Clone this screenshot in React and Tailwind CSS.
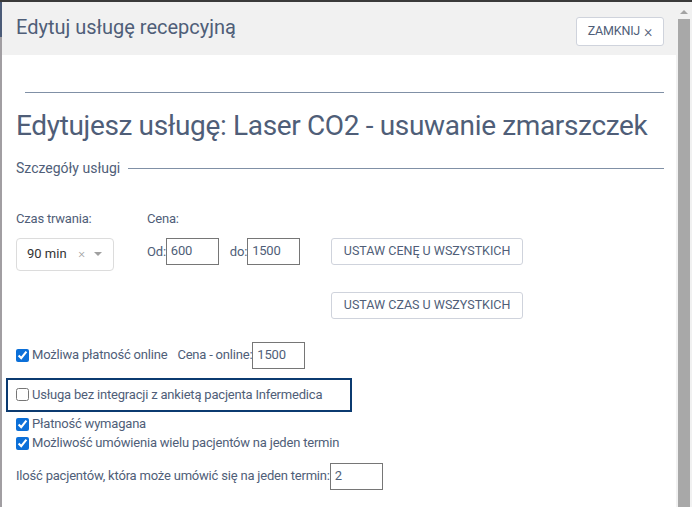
import React from "react";

const txt = "text-[#4f5e78]";
const t13 = `text-[13px] tracking-[-0.2px] ${txt}`;

function Check({ checked }) {
  return (
    <input
      type="checkbox"
      defaultChecked={checked}
      className="m-0 h-[13px] w-[13px] shrink-0 accent-[#0b6fd8]"
    />
  );
}

function Box({ value, w = "w-[53px]" }) {
  return (
    <div className={`${w} h-[27px] shrink-0 border border-[#767676] bg-white pl-[4px] flex items-center text-[13px] tracking-[-0.2px] text-[#4f5e78]`}>
      {value}
    </div>
  );
}

function Btn({ children }) {
  return (
    <button className="h-[27px] w-[192px] rounded-[3px] border border-[#cfd3dc] bg-white text-[12.5px] text-[#4f5e78]">
      {children}
    </button>
  );
}

export default function App() {
  return (
    <div className="w-[692px] h-[507px] overflow-hidden bg-white" style={{ fontFamily: "Roboto, 'Liberation Sans', sans-serif" }}>
      <div className="h-[2px] bg-[#3a3a3a]" />
      <div className="flex h-[505px]">
        <div className="w-[2px] shrink-0 flex flex-col">
          <div className="h-[35px] bg-[#4b5b78]" />
          <div className="flex-1 bg-[#a19ea2]" />
        </div>
        <div className="flex-1 min-w-0 flex flex-col">
          <div className="h-[53px] shrink-0 bg-[#f1f1f1] flex items-center justify-between pl-[14px] pr-[12px]">
            <div className={`text-[20px] ${txt} -mt-[4px]`}>Edytuj usługę recepcyjną</div>
            <button className="h-[29px] w-[88px] rounded-[3px] border border-[#cfd3dc] bg-white text-[12.5px] tracking-[-0.2px] text-[#4f5e78] mt-[6px] flex items-center justify-center gap-[4px]">
              ZAMKNIJ <span className="font-light text-[16px] leading-none">×</span>
            </button>
          </div>
          <div className="flex-1 pl-[14px] pr-[12px]">
            <div className="ml-[9px] mt-[37px] h-px bg-[#8090a6]" />
            <div className={`mt-[16px] text-[28px] tracking-[-0.35px] leading-[34px] whitespace-nowrap ${txt}`}>
              Edytujesz usługę: Laser CO2 - usuwanie zmarszczek
            </div>
            <div className="mt-[15px] flex items-center gap-[8px]">
              <span className={`text-[14px] ${txt}`}>Szczegóły usługi</span>
              <div className="flex-1 h-px bg-[#8090a6]" />
            </div>
            <div className="mt-[30px] flex">
              <div className="w-[131px] shrink-0">
                <div className={t13}>Czas trwania:</div>
                <div className="mt-[9px] h-[33px] w-[98px] rounded-[4px] border border-[#dcdcdc] flex items-center pl-[10px] pr-[11px]">
                  <span className="text-[13px] text-[#333]">90 min</span>
                  <span className="ml-auto text-[13px] text-[#a0a0a0] font-light">×</span>
                  <span className="ml-[9px] w-0 h-0 border-l-[4px] border-r-[4px] border-t-[4px] border-l-transparent border-r-transparent border-t-[#a0a0a0]" />
                </div>
              </div>
              <div>
                <div className={t13}>Cena:</div>
                <div className="mt-[9px] flex items-start">
                  <span className={`mt-[4px] ${t13}`}>Od:</span>
                  <Box value="600" />
                  <span className={`ml-[11px] mt-[4px] ${t13}`}>do:</span>
                  <Box value="1500" />
                  <div className="ml-[31px] flex flex-col gap-[27px]">
                    <Btn>USTAW CENĘ U WSZYSTKICH</Btn>
                    <Btn>USTAW CZAS U WSZYSTKICH</Btn>
                  </div>
                </div>
              </div>
            </div>
            <div className="mt-[23px] flex items-center">
              <Check checked />
              <span className={`ml-[3px] ${t13}`}>Możliwa płatność online</span>
              <span className={`ml-[10px] ${t13}`}>Cena - online:</span>
              <Box value="1500" />
            </div>
            <div className="mt-[9px] -ml-[10px] w-[346px] h-[34px] border-2 border-[#0b3a70] flex items-center pl-[8px]">
              <Check />
              <span className={`ml-[3px] ${t13}`}>Usługa bez integracji z ankietą pacjenta Infermedica</span>
            </div>
            <div className="mt-[3px] flex items-center h-[19px]">
              <Check checked />
              <span className={`ml-[3px] ${t13}`}>Płatność wymagana</span>
            </div>
            <div className="flex items-center h-[19px]">
              <Check checked />
              <span className={`ml-[3px] ${t13}`}>Możliwość umówienia wielu pacjentów na jeden termin</span>
            </div>
            <div className="mt-[10px] flex items-center">
              <span className={t13}>Ilość pacjentów, która może umówić się na jeden termin:</span>
              <Box value="2" />
            </div>
          </div>
        </div>
        <div className="w-[16px] shrink-0 bg-[#f1f1f1] flex flex-col items-center">
          <div className="mt-[8px] w-0 h-0 border-l-[4px] border-r-[4px] border-b-[4px] border-l-transparent border-r-transparent border-b-[#a3a3a3]" />
          <div className="mt-[5px] w-[12px] flex-1 bg-[#a8a8a8]" />
        </div>
      </div>
    </div>
  );
}
